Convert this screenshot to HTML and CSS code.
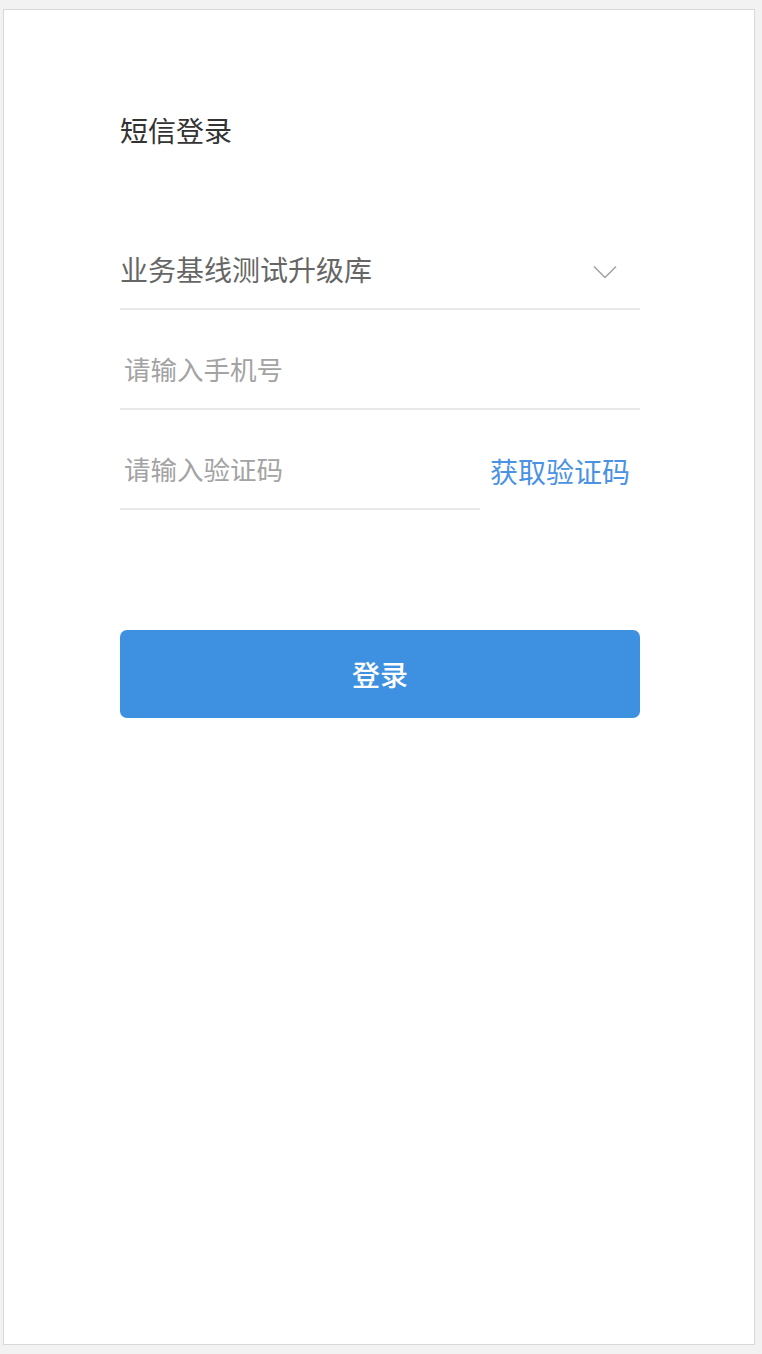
FILE: index.html
```html
<!DOCTYPE html>
<html lang="zh-CN">
<head>
<meta charset="utf-8">
<title>短信登录</title>
<link rel="stylesheet" href="styles.css">
</head>
<body>
<div class="card">
  <div class="content">
    <h1 class="title">短信登录</h1>
    <div class="row select-row">
      <span class="select-text">业务基线测试升级库</span>
      <svg class="chevron" width="24" height="14" viewBox="0 0 24 14"><path d="M1 1.5 L12 12.5 L23 1.5" fill="none" stroke="#a0a0a0" stroke-width="1.5"/></svg>
    </div>
    <div class="row">
      <span class="placeholder">请输入手机号</span>
    </div>
    <div class="code-row">
      <div class="row code-input">
        <span class="placeholder">请输入验证码</span>
      </div>
      <span class="get-code">获取验证码</span>
    </div>
    <button class="login-btn">登录</button>
  </div>
</div>
</body>
</html>
```

FILE: styles.css
```css
html, body {
  margin: 0;
  padding: 0;
}
body {
  background: #f2f2f2;
  font-family: "Noto Sans CJK SC", "Noto Sans", sans-serif;
  padding: 9px 7px 9px 3px;
}
.card {
  background: #ffffff;
  border: 1px solid #d8d8d8;
  height: 1334px;
}
.content {
  width: 520px;
  margin-left: 116px;
  padding-top: 100px;
}
.title {
  margin: 0;
  font-size: 28px;
  font-weight: 400;
  line-height: 40px;
  color: #333333;
  height: 40px;
  margin-bottom: 60px;
}
.row {
  display: flex;
  align-items: center;
  justify-content: space-between;
  padding-top: 39px;
  padding-bottom: 19px;
  height: 40px;
  border-bottom: 2px solid #e8e8e8;
}
.select-text {
  font-size: 28px;
  color: #666666;
  line-height: 40px;
}
.chevron {
  margin-right: 23px;
  margin-top: 6px;
}
.placeholder {
  font-size: 26.5px;
  color: #a3a3a3;
  line-height: 40px;
  padding-left: 4px;
}
.code-row {
  display: flex;
  align-items: flex-start;
}
.code-input {
  width: 360px;
  flex: none;
}
.get-code {
  margin-left: 10px;
  padding-top: 41px;
  font-size: 28px;
  line-height: 40px;
  color: #4a92e3;
}
.login-btn {
  display: block;
  width: 520px;
  height: 88px;
  margin-top: 120px;
  border: none;
  border-radius: 7px;
  background: #3d91e0;
  color: #ffffff;
  font-family: "Noto Sans CJK SC", "Noto Sans", sans-serif;
  font-size: 28px;
  font-weight: 500;
  padding: 0;
}
```
